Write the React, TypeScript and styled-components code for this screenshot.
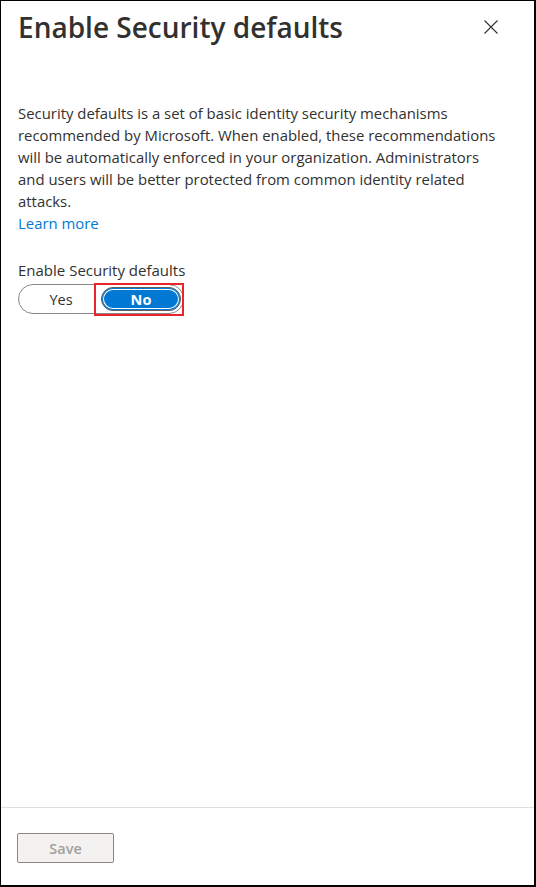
import { styled, createGlobalStyle } from "styled-components";

const GlobalStyle = createGlobalStyle`
  html, body {
    margin: 0;
    padding: 0;
    background: #ffffff;
  }
  * {
    box-sizing: border-box;
  }
`;

const font = `"Open Sans", "Noto Sans", "Liberation Sans", sans-serif`;

const Panel = styled.div`
  width: 536px;
  height: 887px;
  display: flex;
  flex-direction: column;
  border-top: 1px solid #000;
  border-left: 1px solid #000;
  border-right: 2px solid #000;
  border-bottom: 2px solid #000;
  background: #fff;
  font-family: ${font};
  color: #323130;
`;

const Header = styled.header`
  display: flex;
  align-items: center;
  justify-content: space-between;
  padding: 6px 27px 0 17px;
`;

const Title = styled.h1`
  margin: 0;
  font-size: 28px;
  font-weight: 600;
  line-height: 40px;
  color: #323130;
`;

const CloseButton = styled.button`
  width: 32px;
  height: 32px;
  display: flex;
  align-items: center;
  justify-content: center;
  padding: 0;
  border: none;
  background: transparent;
  color: #323130;
  cursor: pointer;
`;

const Content = styled.main`
  flex: 1;
  padding: 55px 28px 0 17px;
`;

const Description = styled.p`
  margin: 0;
  font-size: 14.9px;
  line-height: 22px;
`;

const Link = styled.a`
  display: block;
  font-size: 14.9px;
  line-height: 22px;
  color: #0078d4;
  text-decoration: none;
`;

const FieldLabel = styled.div`
  margin-top: 25px;
  font-size: 15px;
  line-height: 22px;
`;

const ToggleGroup = styled.div`
  position: relative;
  margin-top: 3px;
  display: inline-flex;
  height: 30px;
  padding: 2px;
  border: 1px solid #8a8886;
  border-radius: 15px;
`;

const Segment = styled.button<{ $selected?: boolean }>`
  width: 80px;
  height: 24px;
  padding: 0;
  border-radius: 12px;
  font-family: ${font};
  font-size: 14.5px;
  font-weight: ${(p) => (p.$selected ? 700 : 400)};
  color: ${(p) => (p.$selected ? "#ffffff" : "#323130")};
  background: ${(p) => (p.$selected ? "#0078d4" : "transparent")};
  border: 1px solid ${(p) => (p.$selected ? "#605e5c" : "transparent")};
  box-shadow: ${(p) =>
    p.$selected ? "inset 0 0 0 1px #0078d4, inset 0 0 0 2px #ffffff" : "none"};
  cursor: pointer;
`;

const Highlight = styled.span`
  position: absolute;
  left: 75px;
  top: -2px;
  width: 90px;
  height: 33px;
  border: 2px solid #e8252b;
  pointer-events: none;
`;

const Footer = styled.footer`
  height: 78px;
  border-top: 1px solid #e1dfdd;
  padding: 25px 0 0 16px;
`;

const SaveButton = styled.button`
  width: 97px;
  height: 30px;
  border: 1px solid #8a8886;
  border-radius: 2px;
  background: #f3f2f1;
  color: #a19f9d;
  font-family: ${font};
  font-size: 14.5px;
  font-weight: 600;
  cursor: default;
`;

function CloseIcon() {
  return (
    <svg width="14" height="14" viewBox="0 0 14 14" fill="none">
      <path d="M0.5 0.5 L13.5 13.5 M13.5 0.5 L0.5 13.5" stroke="#323130" strokeWidth="1.1" />
    </svg>
  );
}

export default function App() {
  return (
    <>
      <GlobalStyle />
      <Panel>
        <Header>
          <Title>Enable Security defaults</Title>
          <CloseButton aria-label="Close">
            <CloseIcon />
          </CloseButton>
        </Header>
        <Content>
          <Description>
            Security defaults is a set of basic identity security mechanisms recommended by
            Microsoft. When enabled, these recommendations will be automatically enforced in your
            organization. Administrators and users will be better protected from common identity
            related attacks.
          </Description>
          <Link href="#">Learn more</Link>
          <FieldLabel>Enable Security defaults</FieldLabel>
          <ToggleGroup>
            <Segment>Yes</Segment>
            <Segment $selected>No</Segment>
            <Highlight />
          </ToggleGroup>
        </Content>
        <Footer>
          <SaveButton disabled>Save</SaveButton>
        </Footer>
      </Panel>
    </>
  );
}
